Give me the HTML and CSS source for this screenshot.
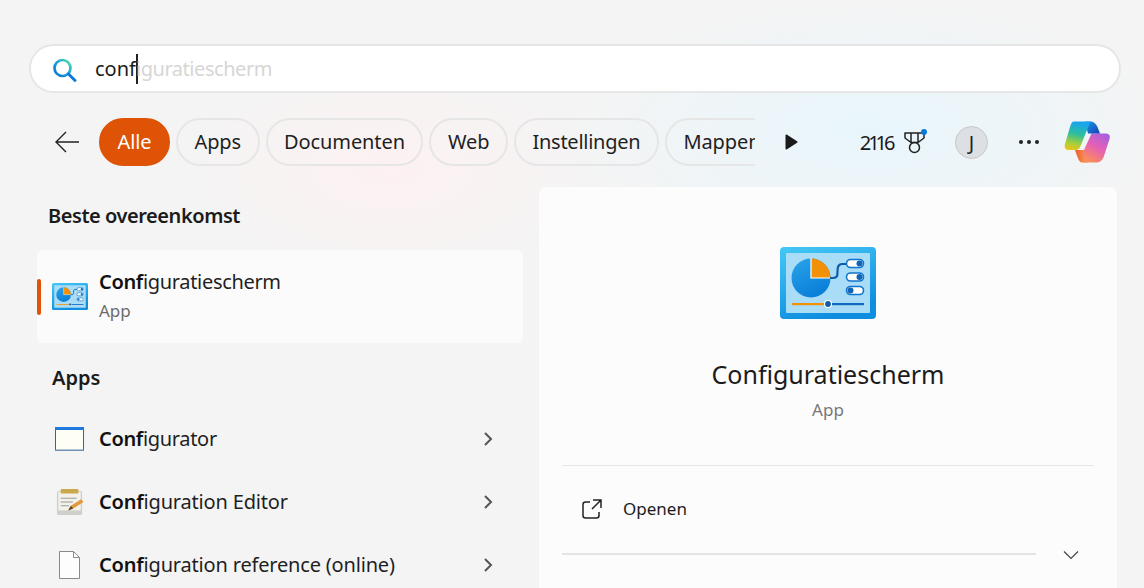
FILE: index.html
```html
<!DOCTYPE html>
<html lang="nl">
<head>
<meta charset="utf-8">
<title>Zoeken</title>
<link rel="stylesheet" href="styles.css">
</head>
<body>
<svg class="defs" width="0" height="0" aria-hidden="true">
  <defs>
    <linearGradient id="cpOuter" x1="0" y1="0" x2="0.4" y2="1"><stop offset="0" stop-color="#45c8f5"/><stop offset="1" stop-color="#0f8ee0"/></linearGradient>
    <linearGradient id="cpPie" x1="0" y1="0" x2="0.5" y2="1"><stop offset="0" stop-color="#2aa4ea"/><stop offset="1" stop-color="#0a7fd8"/></linearGradient>
    <linearGradient id="srch" x1="1" y1="0" x2="0" y2="1"><stop offset="0" stop-color="#5fe59a"/><stop offset="0.4" stop-color="#20a8d8"/><stop offset="1" stop-color="#0a72d6"/></linearGradient>
    <linearGradient id="coA" x1="0.3" y1="0" x2="0.1" y2="1"><stop offset="0" stop-color="#18a5ee"/><stop offset="0.4" stop-color="#2fbf9a"/><stop offset="0.72" stop-color="#a4cf3c"/><stop offset="1" stop-color="#f4c414"/></linearGradient>
    <linearGradient id="coB" x1="0.8" y1="0" x2="0.3" y2="1"><stop offset="0" stop-color="#a85fe0"/><stop offset="0.5" stop-color="#e660b4"/><stop offset="1" stop-color="#fb8e58"/></linearGradient>
    <linearGradient id="coC" x1="0" y1="0" x2="1" y2="1"><stop offset="0" stop-color="#1a9be8"/><stop offset="1" stop-color="#1440b4"/></linearGradient>
    <linearGradient id="coD" x1="0" y1="0" x2="1" y2="0"><stop offset="0" stop-color="#ee5a34"/><stop offset="1" stop-color="#fba050"/></linearGradient>
    <symbol id="cp" viewBox="0 0 96 72">
      <rect width="96" height="72" rx="4" fill="url(#cpOuter)"/>
      <rect x="6" y="6" width="84" height="60" rx="1" fill="#a9dcf7"/>
      <circle cx="31" cy="31" r="19.500" fill="url(#cpPie)"/>
      <path d="M31 31V11.500A19.500 19.500 0 0 1 50.500 31z" fill="#f29107"/>
      <path d="M31 11v20h19.500" fill="none" stroke="#fff" stroke-width="1.200"/>
      <path d="M50 31h3c4.500 0 4.500-2.500 4.500-6.500S58 17 62 17h5" fill="none" stroke="#0f5cab" stroke-width="2.200"/>
      <rect x="66.500" y="12.500" width="17" height="8" rx="4" fill="#fff" stroke="#0f74cc" stroke-width="1.600"/>
      <circle cx="79.500" cy="16.500" r="3" fill="#0f64b5"/>
      <rect x="66.500" y="26" width="17" height="8" rx="4" fill="#fff" stroke="#0f74cc" stroke-width="1.600"/>
      <circle cx="79.500" cy="30" r="3" fill="#0f64b5"/>
      <rect x="66.500" y="39.500" width="17" height="8" rx="4" fill="#fff" stroke="#0f74cc" stroke-width="1.600"/>
      <circle cx="70.500" cy="43.500" r="3" fill="#0f64b5"/>
      <rect x="12" y="56" width="35" height="2.200" fill="#f29107"/>
      <rect x="48" y="56" width="36" height="2.200" fill="#0f68bd"/>
      <circle cx="48" cy="57" r="3.500" fill="#0f5cab" stroke="#fff" stroke-width="1.200"/>
    </symbol>
  </defs>
</svg>

<main class="app">
  <div class="search">
    <svg class="search-icon" viewBox="0 0 26 26" width="26" height="26" aria-hidden="true">
      <circle cx="9.500" cy="12" r="8" fill="none" stroke="url(#srch)" stroke-width="2.700"/>
      <path d="M15.500 18l6.500 6.500" stroke="#0a78d8" stroke-width="2.800" stroke-linecap="round"/>
    </svg>
    <span class="typed">conf</span><span class="caret"></span><span class="ghost">iguratiescherm</span>
  </div>

  <div class="toolbar">
    <svg class="back" viewBox="0 0 26 24" width="26" height="24" aria-hidden="true"><path d="M25 12H2M12 2L2 12l10 10" fill="none" stroke="#222" stroke-width="1.400"/></svg>
    <div class="pills">
      <span class="pill active">Alle</span>
      <span class="pill">Apps</span>
      <span class="pill">Documenten</span>
      <span class="pill">Web</span>
      <span class="pill narrow">Instellingen</span>
      <span class="pill">Mappen</span>
    </div>
    <svg class="play" viewBox="0 0 13 16" width="13" height="16" aria-hidden="true"><path d="M1.500 1.500L11.500 8 1.500 14.500z" fill="#1a1a1a" stroke="#1a1a1a" stroke-width="2" stroke-linejoin="round"/></svg>
    <span class="points">2116</span>
    <svg class="trophy" viewBox="0 -2 25 26" width="25" height="26" aria-hidden="true">
      <path d="M2 2h19v5l-6 4.500H8L2 7zM8 2v9.500M15 2v9.500" fill="none" stroke="#222" stroke-width="1.500" stroke-linejoin="round"/>
      <circle cx="11.500" cy="16.500" r="5" fill="none" stroke="#222" stroke-width="1.500"/>
      <circle cx="21" cy="1" r="3" fill="#0a78d8"/>
    </svg>
    <span class="avatar">J</span>
    <span class="dots"><i></i><i></i><i></i></span>
    <svg class="copilot" viewBox="0 0 46 42" width="46" height="42" aria-hidden="true">
      <path d="M11 29h10l3 12.500h-6C15 41.500 13.500 36 11 29z" fill="url(#coD)"/>
      <path d="M27.500 12.500H42c3 0 4.500 2 3.500 5.500L40 35c-1.500 4-3.500 6.500-8 6.500H19l1-12.500z" fill="url(#coB)"/>
      <path d="M21 .5h5c3.500 0 6 2 7.500 5.500l2.500 6.500H24z" fill="url(#coC)"/>
      <path d="M10 .5h16.500L16.500 25c-1 2.500-2.500 4-5 4H4.500C1.500 29 0 26.500 1 23L6 6c1-3.500 2-5.500 4-5.500z" fill="url(#coA)"/>
    </svg>
  </div>

  <div class="columns">
    <section class="results">
      <h2 class="heading first">Beste overeenkomst</h2>
      <div class="best">
        <span class="accent"></span>
        <svg class="best-icon" aria-hidden="true"><use href="#cp"/></svg>
        <div>
          <div class="name tight"><b>Conf</b>iguratiescherm</div>
          <div class="sub">App</div>
        </div>
      </div>
      <h2 class="heading second">Apps</h2>
      <div class="row">
        <svg class="row-icon" viewBox="0 0 30 28" aria-hidden="true">
          <rect x=".5" y="2.500" width="28" height="23" fill="#fffef4" stroke="#2368b4"/>
          <rect x="0" y="2" width="29" height="3" fill="#1f7ae0"/>
          <rect x="0" y="24.500" width="29" height="1.500" fill="#6f8fb4"/>
        </svg>
        <span class="name tight"><b>Conf</b>igurator</span>
        <svg class="chev" viewBox="0 0 10 16" width="10" height="16" aria-hidden="true"><path d="M2 2l6 6-6 6" fill="none" stroke="#555" stroke-width="2"/></svg>
      </div>
      <div class="row">
        <svg class="row-icon" viewBox="0 0 30 30" aria-hidden="true">
          <rect x="1" y="3" width="27" height="26" rx="2" fill="#cfcfcb"/>
          <rect x="2.500" y="4" width="24" height="20" fill="#f3f1ea"/>
          <rect x="5" y="1" width="19" height="5" rx="1" fill="#c9a94a"/>
          <path d="M5 11h17M5 15h13M5 19h9" stroke="#9a9a9a" stroke-width="1.200"/>
          <path d="M13 24l3-5 11-7 2.500 3-11 7z" fill="#e09a3a"/>
          <path d="M13 24l3-5 2.500 3z" fill="#5a4a30"/>
        </svg>
        <span class="name mid"><b>Conf</b>iguration Editor</span>
        <svg class="chev" viewBox="0 0 10 16" width="10" height="16" aria-hidden="true"><path d="M2 2l6 6-6 6" fill="none" stroke="#555" stroke-width="2"/></svg>
      </div>
      <div class="row">
        <svg class="row-icon" viewBox="0 0 30 28" aria-hidden="true">
          <path d="M4.500.5h14l6 6v21h-20z" fill="#fdfdfd" stroke="#8a8a8a"/>
          <path d="M18.500.5v6h6" fill="none" stroke="#8a8a8a"/>
        </svg>
        <span class="name mid"><b>Conf</b>iguration reference (online)</span>
        <svg class="chev" viewBox="0 0 10 16" width="10" height="16" aria-hidden="true"><path d="M2 2l6 6-6 6" fill="none" stroke="#555" stroke-width="2"/></svg>
      </div>
    </section>

    <aside class="detail">
      <svg class="detail-icon" aria-hidden="true"><use href="#cp"/></svg>
      <div class="detail-title">Configuratiescherm</div>
      <div class="detail-sub">App</div>
      <hr class="rule">
      <div class="action">
        <svg viewBox="0 0 22 22" width="22" height="22" aria-hidden="true"><path d="M9 4H4.500A2.500 2.500 0 0 0 2 6.500v11A2.500 2.500 0 0 0 4.500 20h11a2.500 2.500 0 0 0 2.500-2.500V14M12 2h8v8M20 2l-9 9" fill="none" stroke="#222" stroke-width="1.500"/></svg>
        <span>Openen</span>
      </div>
      <div class="more">
        <span class="more-line"></span>
        <svg class="more-chev" viewBox="0 0 16 10" width="16" height="10" aria-hidden="true"><path d="M1 1.500l7 7 7-7" fill="none" stroke="#444" stroke-width="1.200"/></svg>
      </div>
    </aside>
  </div>
</main>
</body>
</html>
```
FILE: styles.css
```css
* { box-sizing: border-box; }
html, body { margin: 0; height: 100%; }
body {
  font-family: "Noto Sans", "Open Sans", sans-serif;
  color: #1b1b1b;
  overflow: hidden;
  background:
    radial-gradient(ellipse 210px 110px at 390px 170px, #fdf1f2 0%, rgba(253,241,242,0) 100%),
    radial-gradient(ellipse 300px 130px at 870px 130px, #e8f6fc 0%, rgba(232,246,252,0) 100%),
    #f4f4f4;
}
.defs { display: block; height: 0; }
.app { width: 1144px; height: 588px; display: flex; flex-direction: column; overflow: hidden; }

.search {
  margin: 44px 23px 0 29px;
  height: 49px;
  flex: none;
  background: #fff;
  border: 2px solid #e6e6e6;
  border-radius: 25px;
  display: flex;
  align-items: center;
  padding-left: 22px;
  font-size: 20px;
}
.search-icon { margin-right: 16px; flex: none; }
.typed { color: #1b1b1b; }
.caret { width: 2px; height: 30px; background: #222; margin: 0 -2px 0 0; flex: none; }
.ghost { color: #d6d6d6; letter-spacing: -.45px; }

.toolbar { display: flex; align-items: center; height: 48px; margin-top: 25px; padding-left: 54px; flex: none; }
.back { flex: none; margin-right: 19px; }
.pills { display: flex; gap: 6px; width: 656px; overflow: hidden; flex: none; }
.pill {
  flex: none;
  height: 48px;
  padding: 0 16.500px 2px;
  display: flex;
  align-items: center;
  border: 2px solid #e6e6e6;
  border-radius: 24px;
  font-size: 20px;
  letter-spacing: -.1px;
  color: #1f1f1f;
}
.pill.narrow { letter-spacing: -.25px; }
.pill.active { background: #de5305; border-color: #de5305; color: #fff; }
.play { flex: none; margin: 0 0 0 30px; }
.points { font-size: 20px; margin-left: 62px; width: 37px; flex: none; font-variant-numeric: proportional-nums; letter-spacing: -1.600px; white-space: nowrap; }
.trophy { flex: none; margin-left: 6px; }
.avatar {
  flex: none;
  width: 33px; height: 33px;
  margin-left: 27px;
  border-radius: 50%;
  background: #dcdfe3;
  border: 1px solid #c8c8c8;
  display: flex; align-items: center; justify-content: center;
  font-size: 20px;
  color: #222;
}
.dots { display: flex; gap: 4px; margin-left: 31px; flex: none; }
.dots i { width: 4px; height: 4px; border-radius: 50%; background: #222; }
.copilot { flex: none; margin-left: 25px; }

.columns { display: flex; flex: 1; min-height: 0; margin-top: 21px; padding-left: 37px; gap: 16px; }
.results { width: 486px; flex: none; }
.heading { font-size: 20px; font-weight: 600; margin: 0; line-height: 28px; }
.heading.first { margin: 15px 0 0 11px; letter-spacing: -.45px; }
.heading.second { margin: 21px 0 0 15px; }
.best {
  position: relative;
  margin-top: 20px;
  height: 93px;
  background: #fbfbfb;
  border-radius: 6px;
  display: flex;
  align-items: center;
  padding-left: 15px;
  gap: 11px;
}
.accent { position: absolute; left: 0; top: 29px; width: 4px; height: 36px; background: #de5305; border-radius: 2px; }
.best-icon { width: 36px; height: 27px; flex: none; }
.name { font-size: 20px; line-height: 28px; color: #1f1f1f; }
.name.tight { letter-spacing: -.33px; }
.name.mid { letter-spacing: -.18px; }
.name b { font-weight: 600; color: #111; }
.sub { font-size: 17px; color: #6b6b6b; line-height: 30px; }
.row { display: flex; align-items: center; height: 63px; padding-left: 18px; }
.heading.second + .row { margin-top: 15px; }
.row-icon { width: 30px; height: 28px; flex: none; margin-right: 14px; }
.row .name { flex: 1; }
.chev { flex: none; margin-right: 30px; }

.detail {
  width: 578px;
  flex: none;
  background: #fcfcfd;
  border-radius: 8px 8px 0 0;
  padding: 60px 23px 0;
  display: flex;
  flex-direction: column;
  align-items: center;
}
.detail-icon { width: 96px; height: 72px; flex: none; }
.detail-title { font-size: 25px; line-height: 34px; margin-top: 38px; }
.detail-sub { font-size: 17px; color: #777; line-height: 24px; margin-top: 7px; }
.rule { width: 100%; border: 0; border-top: 1px solid #e6e6e6; margin: 43px 0 0; }
.action { width: 100%; display: flex; align-items: center; gap: 20px; padding: 2px 0 0 19px; height: 83px; font-size: 17px; }
.more { width: 100%; display: flex; align-items: flex-start; }
.more-line { width: 474px; height: 2px; margin-top: 4px; background: #e4e4e4; }
.more-chev { margin: 1px 0 0 27px; }
```
